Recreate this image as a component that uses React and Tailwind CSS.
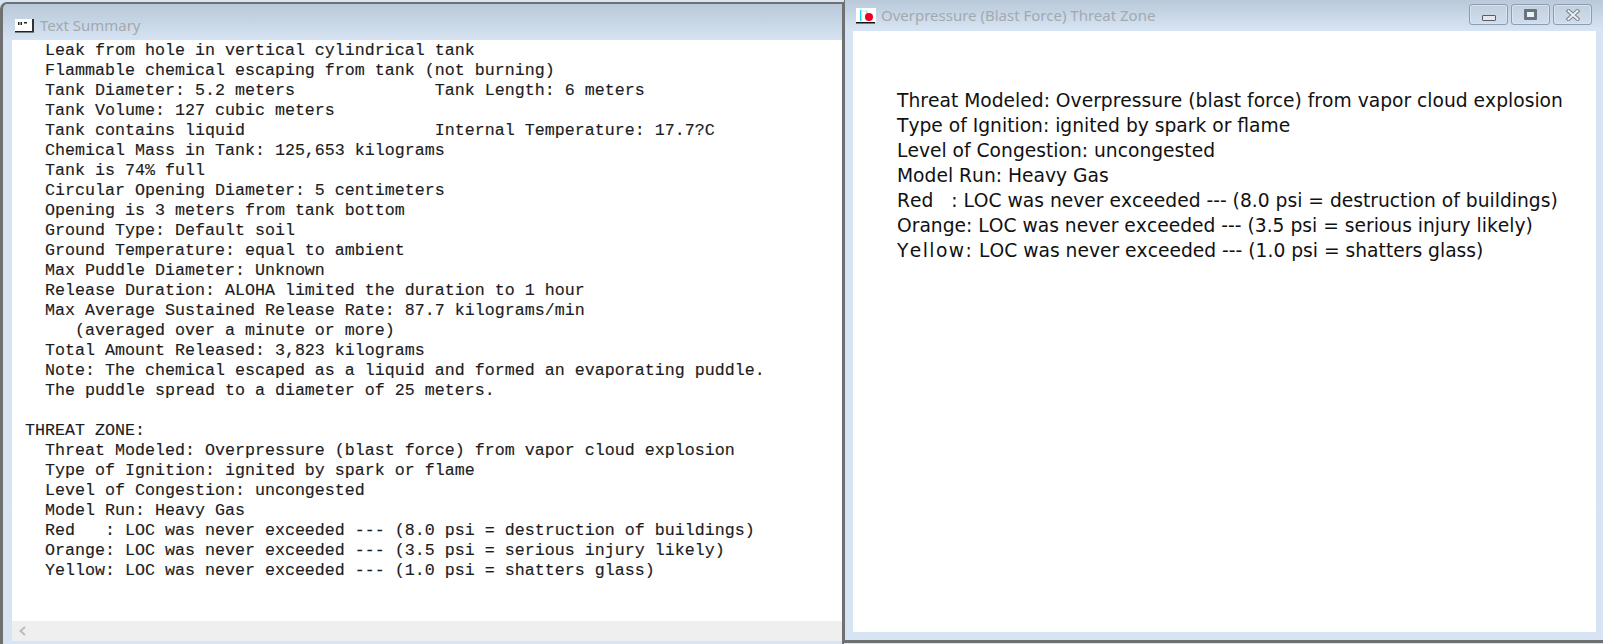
const leftLines = [
  "  Leak from hole in vertical cylindrical tank",
  "  Flammable chemical escaping from tank (not burning)",
  "  Tank Diameter: 5.2 meters              Tank Length: 6 meters",
  "  Tank Volume: 127 cubic meters",
  "  Tank contains liquid                   Internal Temperature: 17.7?C",
  "  Chemical Mass in Tank: 125,653 kilograms",
  "  Tank is 74% full",
  "  Circular Opening Diameter: 5 centimeters",
  "  Opening is 3 meters from tank bottom",
  "  Ground Type: Default soil",
  "  Ground Temperature: equal to ambient",
  "  Max Puddle Diameter: Unknown",
  "  Release Duration: ALOHA limited the duration to 1 hour",
  "  Max Average Sustained Release Rate: 87.7 kilograms/min",
  "     (averaged over a minute or more)",
  "  Total Amount Released: 3,823 kilograms",
  "  Note: The chemical escaped as a liquid and formed an evaporating puddle.",
  "  The puddle spread to a diameter of 25 meters.",
  " ",
  "THREAT ZONE:",
  "  Threat Modeled: Overpressure (blast force) from vapor cloud explosion",
  "  Type of Ignition: ignited by spark or flame",
  "  Level of Congestion: uncongested",
  "  Model Run: Heavy Gas",
  "  Red   : LOC was never exceeded --- (8.0 psi = destruction of buildings)",
  "  Orange: LOC was never exceeded --- (3.5 psi = serious injury likely)",
  "  Yellow: LOC was never exceeded --- (1.0 psi = shatters glass)",
];
const rightLines = [
  "Threat Modeled: Overpressure (blast force) from vapor cloud explosion",
  "Type of Ignition: ignited by spark or flame",
  "Level of Congestion: uncongested",
  "Model Run: Heavy Gas",
  "Red   : LOC was never exceeded --- (8.0 psi = destruction of buildings)",
  "Orange: LOC was never exceeded --- (3.5 psi = serious injury likely)",
];

function TextIcon() {
  return (
    <svg width="19" height="14" viewBox="0 0 19 14" className="shrink-0">
      <rect x="0" y="0" width="19" height="12" fill="#fff" />
      <rect x="0" y="12" width="19" height="1.5" fill="#222" />
      <rect x="17" y="0" width="2" height="13" fill="#333" />
      <rect x="3" y="3" width="1.5" height="3" fill="#222" />
      <rect x="5.5" y="3" width="1.5" height="3" fill="#222" />
      <rect x="9" y="3" width="3" height="1.5" fill="#222" />
    </svg>
  );
}

function ZoneIcon() {
  return (
    <svg width="20" height="16" viewBox="0 0 20 16" className="shrink-0">
      <rect x="0" y="0" width="20" height="14" fill="#fff" />
      <rect x="4" y="2" width="1.5" height="11" fill="#22d3ee" />
      <path d="M5 3 L12 3" stroke="#a5f3fc" strokeWidth="1" />
      <path d="M9 9 L11 2 L12 9 Z" fill="#f9a8d4" />
      <circle cx="13" cy="9" r="4" fill="#ee0022" />
      <rect x="0" y="14" width="19" height="1.5" fill="#111" />
    </svg>
  );
}

function WinButton({ children }) {
  return (
    <div className="w-[39px] h-[21px] flex items-center justify-center rounded-[3px] border border-[#8d9cae] bg-gradient-to-b from-[#c2d0de] to-[#d0dded] shadow-[inset_0_0_0_1px_#d8e3ef]">
      {children}
    </div>
  );
}

export default function App() {
  const rightLine = "h-[25px] leading-[25px] text-[18.7px] text-[#111] font-['DejaVu_Sans',sans-serif] whitespace-pre [font-kerning:none]";
  return (
    <div className="w-[1603px] h-[644px] flex overflow-hidden bg-[#d7e4f3]">
      <div className="w-[844px] h-[644px] pt-[2px] shrink-0">
        <div className="h-full flex flex-col border-l-[3px] border-t-[2px] border-r-[2px] border-[#707070] rounded-tl-[7px] bg-gradient-to-b from-[#b9c9d9] to-[#d7e4f3] to-[38px]">
          <div className="h-[36px] flex items-center pl-[12px] pt-[7px] gap-[6px] shrink-0">
            <TextIcon />
            <span className="text-[15px] text-[#a3a9b0] font-['Noto_Sans',sans-serif] leading-none">Text Summary</span>
          </div>
          <div className="flex-1 flex flex-col ml-[9px] mb-[3px] bg-white min-h-0">
            <div className="flex-1 pl-[13px] pt-[1px] overflow-hidden">
              {leftLines.map((l, i) => (
                <div key={i} className="h-[20px] leading-[20px] text-[16.67px] text-[#1c1c1c] font-['Liberation_Mono',monospace] whitespace-pre [-webkit-text-stroke:0.15px_#1c1c1c]">{l}</div>
              ))}
            </div>
            <div className="h-[20px] bg-[#efefef] flex items-center pl-[6px] shrink-0">
              <svg width="9" height="10" viewBox="0 0 9 10">
                <path d="M7 1 L2.5 5 L7 9" fill="none" stroke="#bdbdbd" strokeWidth="2" />
              </svg>
            </div>
          </div>
        </div>
      </div>
      <div className="flex-1 h-[643px] flex flex-col border-l-[1px] border-b-[3px] border-[#707070] bg-gradient-to-b from-[#b9c9d9] to-[#d7e4f3] to-[30px]">
        <div className="h-[31px] flex items-center pl-[11px] pr-[11px] shrink-0">
          <ZoneIcon />
          <span className="ml-[5px] text-[15px] text-[#a3a9b0] font-['Noto_Sans',sans-serif] leading-none">Overpressure (Blast Force) Threat Zone</span>
          <div className="ml-auto flex gap-[3px] -mt-[2px]">
            <WinButton><div className="w-[14px] h-[6px] mt-[6px] rounded-[1px] border border-[#555e6b] bg-[#e4e8ee]" /></WinButton>
            <WinButton><div className="w-[13px] h-[11px] rounded-[1px] border-[3px] border-[#69727f] bg-[#eef2f6]" /></WinButton>
            <WinButton>
              <svg width="14" height="12" viewBox="0 0 14 12">
                <path d="M2.5 2 L11.5 10 M11.5 2 L2.5 10" stroke="#7a828c" strokeWidth="4" strokeLinecap="square" />
                <path d="M2.5 2 L11.5 10 M11.5 2 L2.5 10" stroke="#eceff3" strokeWidth="2" strokeLinecap="square" />
              </svg>
            </WinButton>
          </div>
        </div>
        <div className="flex-1 ml-[8px] mr-[7px] mb-[8px] bg-white pl-[44px] pt-[57px]">
          {rightLines.map((l, i) => (
            <div key={i} className={rightLine}>{l}</div>
          ))}
          <div className={rightLine}><span className="tracking-[1.4px]">Yellow:</span> LOC was never exceeded --- (1.0 psi = shatters glass)</div>
        </div>
      </div>
    </div>
  );
}
